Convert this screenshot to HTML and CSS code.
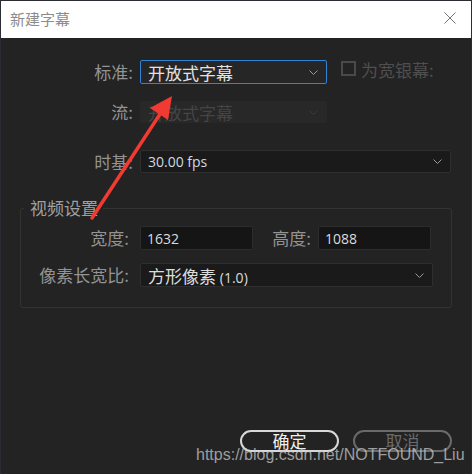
FILE: index.html
```html
<!DOCTYPE html>
<html lang="zh-CN">
<head>
  <meta charset="UTF-8">
  <title>新建字幕</title>
  <link rel="stylesheet" href="styles.css">
</head>
<body>

  <div class="window">
    <!-- Title bar -->
    <div class="titlebar">
      <span class="title">新建字幕</span>
      <svg class="close" width="12" height="12" viewBox="0 0 12 12">
        <path d="M0.5 0.5 L11.5 11.5 M11.5 0.5 L0.5 11.5" stroke="#777" stroke-width="1" fill="none"/>
      </svg>
    </div>

    <div class="content">
      <div class="row row-std">
        <span class="label">标准:</span>
        <div class="select select-focus select-short">
          <span>开放式字幕</span>
          <svg class="chevron" width="9" height="5" viewBox="0 0 9 5"><path d="M0.5 0.5 L4.5 4.5 L8.5 0.5" stroke="#999" fill="none"/></svg>
        </div>
        <span class="check"></span>
        <span class="check-label">为宽银幕:</span>
      </div>

      <div class="row row-stream">
        <span class="label">流:</span>
        <div class="select select-disabled select-short">
          <span>开放式字幕</span>
          <svg class="chevron" width="9" height="5" viewBox="0 0 9 5"><path d="M0.5 0.5 L4.5 4.5 L8.5 0.5" stroke="#3a3a3a" fill="none"/></svg>
        </div>
      </div>

      <div class="row row-time">
        <span class="label">时基:</span>
        <div class="select select-long">
          <span class="latin">30.00 fps</span>
          <svg class="chevron" width="9" height="5" viewBox="0 0 9 5"><path d="M0.5 0.5 L4.5 4.5 L8.5 0.5" stroke="#999" fill="none"/></svg>
        </div>
      </div>

      <fieldset class="group">
        <legend>视频设置</legend>
        <div class="row row-size">
          <span class="label label-in">宽度:</span>
          <div class="field"><span class="latin">1632</span></div>
          <span class="label label-h">高度:</span>
          <div class="field"><span class="latin">1088</span></div>
        </div>
        <div class="row row-par">
          <span class="label label-in">像素长宽比:</span>
          <div class="select select-par">
            <span>方形像素 <span class="latin">(1.0)</span></span>
            <svg class="chevron" width="9" height="5" viewBox="0 0 9 5"><path d="M0.5 0.5 L4.5 4.5 L8.5 0.5" stroke="#999" fill="none"/></svg>
          </div>
        </div>
      </fieldset>

      <div class="buttons">
        <button class="btn btn-ok">确定</button>
        <button class="btn btn-cancel">取消</button>
      </div>
    </div>
  </div>

  <!-- annotation overlay -->
  <svg class="arrow" width="472" height="474" viewBox="0 0 472 474">
    <line x1="92" y1="218" x2="162" y2="111" stroke="#f03a32" stroke-width="3.5" stroke-linecap="round"/>
    <polygon points="172,96 168,120 150,108" fill="#f03a32"/>
  </svg>

  <div class="watermark">https://blog.csdn.net/NOTFOUND_Liu</div>

</body>
</html>
```

FILE: styles.css
```css
html, body {
  margin: 0;
  padding: 0;
  background: #2c2c34;
  height: 100%;
  overflow: hidden;
}
body {
  font-family: "Noto Sans CJK SC", "Noto Sans", sans-serif;
  font-size: 17px;
  color: #939393;
  position: relative;
}
.window {
  margin: 1px 0 0 1px;
  width: 470px;
  height: 473px;
  background: #232323;
}
.titlebar {
  height: 37px;
  background: #ffffff;
  display: flex;
  align-items: center;
  justify-content: space-between;
  padding: 0 15px 0 9px;
}
.title {
  color: #8c8c8c;
  font-size: 15px;
  margin-top: -2px;
}
.close {
  margin-top: -4px;
}
.content {
  padding-top: 22px;
}
.row {
  display: flex;
  align-items: center;
}
.label {
  width: 132px;
  text-align: right;
  padding-right: 7px;
  line-height: 20px;
  white-space: nowrap;
}
.latin {
  font-family: "Open Sans", "Noto Sans", sans-serif;
  font-size: 14px;
}
.select {
  box-sizing: border-box;
  display: flex;
  align-items: center;
  justify-content: space-between;
  padding: 0 8px 0 7px;
  border: 1px solid #2e2e2e;
  border-radius: 2px;
  background: #1a1a1a;
  color: #d6d6d6;
  height: 23px;
}
.select-short {
  width: 187px;
}
.select-focus {
  height: 24px;
  border-color: #2f84d6;
  background: #262626;
  color: #e2e2e2;
}
.select-disabled {
  height: 22px;
  background: #282828;
  border-color: #282828;
  color: #454545;
}
.select-long {
  width: 311px;
  color: #d0d8e0;
}
.check {
  box-sizing: border-box;
  width: 15px;
  height: 15px;
  border: 2px solid #4a4a4a;
  margin-left: 14px;
  margin-top: -8px;
}
.check-label {
  color: #4f4f4f;
  margin-left: 5px;
  margin-top: -6px;
}
.row-stream {
  margin-top: 17px;
}
.row-time {
  margin-top: 27px;
}
.group {
  box-sizing: border-box;
  margin: 25px 0 0 19px;
  width: 432px;
  height: 110px;
  padding: 0;
  border: 1px solid #333333;
  border-radius: 3px;
}
.group legend {
  margin-left: 3px;
  padding: 0 5px 0 6px;
  line-height: 20px;
  color: #a0a0a0;
}
.label-in {
  width: 108px;
  padding-right: 11px;
}
.label-h {
  width: 58px;
  padding-right: 7px;
}
.row-size {
  margin-top: 8px;
}
.field {
  box-sizing: border-box;
  width: 113px;
  height: 24px;
  border: 1px solid #2c2c2c;
  border-radius: 2px;
  background: #151515;
  color: #dcdcdc;
  display: flex;
  align-items: center;
  padding-left: 6px;
}
.row-par {
  margin-top: 13px;
}
.select-par {
  width: 293px;
  height: 24px;
  color: #dcdcdc;
}
.buttons {
  display: flex;
  margin: 122px 0 0 239px;
  gap: 14px;
}
.btn {
  box-sizing: border-box;
  width: 99px;
  height: 22px;
  border-radius: 11px;
  background: transparent;
  font-family: "Noto Sans CJK SC", sans-serif;
  font-size: 17px;
  line-height: 18px;
  padding: 0;
}
.btn-ok {
  border: 2px solid #d8d8d8;
  color: #f0f0f0;
}
.btn-cancel {
  border: 2px solid #6a6a6a;
  color: #6a6a6a;
}
.arrow {
  position: absolute;
  left: 0;
  top: 0;
}
.watermark {
  position: absolute;
  left: 196px;
  top: 445px;
  font-family: "Liberation Sans", Arial, sans-serif;
  font-size: 16px;
  line-height: 20px;
  color: rgba(200, 200, 200, 0.75);
}
```
